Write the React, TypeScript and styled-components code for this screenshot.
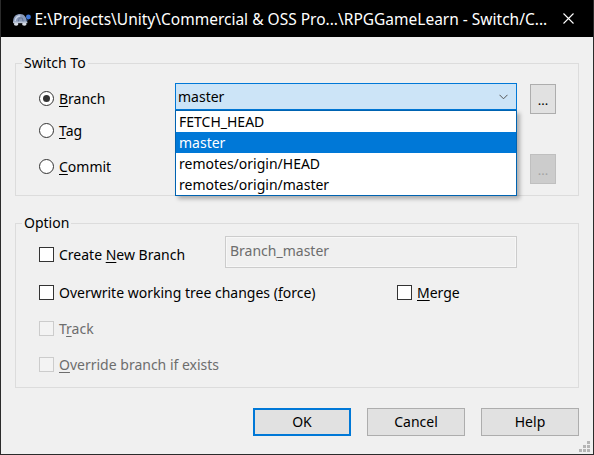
import React from 'react';
import styled, { createGlobalStyle } from 'styled-components';

const GlobalStyle = createGlobalStyle`
    html, body {
        margin: 0;
        padding: 0;
        background: #f0f0f0;
    }
    body {
        font-family: "Noto Sans", "Liberation Sans", sans-serif;
        font-size: 14px;
        color: #000;
    }
    * { box-sizing: border-box; }
`;

const Window = styled.div`
    position: relative;
    width: 594px;
    height: 455px;
    display: flex;
    flex-direction: column;
    background: #f0f0f0;
    border: 1px solid #2b2b2b;
    border-top: none;
    overflow: hidden;
`;

const TitleBar = styled.div`
    height: 37px;
    flex-shrink: 0;
    background: #000;
    display: flex;
    align-items: center;
    padding-left: 10px;
    color: #fff;
`;

const TitleText = styled.span`
    margin-left: 3px;
    font-size: 15.5px;
    white-space: nowrap;
    flex: 1;
`;

const CloseBtn = styled.div`
    width: 46px;
    height: 37px;
    display: flex;
    align-items: center;
    justify-content: center;
    margin-right: 3px;
`;

const Body = styled.div`
    flex: 1;
    padding: 16px 14px 0 14px;
    display: flex;
    flex-direction: column;
`;

const Group = styled.fieldset<{ $mt?: number }>`
    margin: ${p => p.$mt ?? 0}px 0 0 0;
    padding: 0;
    border: 1px solid #dcdcdc;
    min-width: 0;
`;

const Legend = styled.legend`
    padding: 0 2px;
    margin-left: 6px;
    line-height: 20px;
    font-size: 14px;
`;

const GroupInner = styled.div<{ $pt: number; $pb: number }>`
    padding: ${p => p.$pt}px 0 ${p => p.$pb}px 23px;
    display: flex;
    flex-direction: column;
`;

const Row = styled.div<{ $h: number; $mt?: number }>`
    height: ${p => p.$h}px;
    margin-top: ${p => p.$mt ?? 0}px;
    display: flex;
    align-items: center;
`;

const Option = styled.label<{ $w?: number; $mt?: number; $disabled?: boolean }>`
    display: flex;
    align-items: center;
    width: ${p => (p.$w ? `${p.$w}px` : 'auto')};
    margin-top: ${p => p.$mt ?? 0}px;
    flex-shrink: 0;
    color: ${p => (p.$disabled ? '#6d6d6d' : '#000')};
    white-space: nowrap;

    u {
        text-decoration-thickness: 1px;
        text-underline-offset: 2px;
    }
`;

const RadioCircle = styled.span<{ $checked?: boolean }>`
    width: 15px;
    height: 15px;
    border-radius: 50%;
    border: 1px solid #333;
    background: #fff;
    margin-right: 5px;
    display: flex;
    align-items: center;
    justify-content: center;

    &::after {
        content: '';
        width: 7px;
        height: 7px;
        border-radius: 50%;
        background: #333;
        display: ${p => (p.$checked ? 'block' : 'none')};
    }
`;

const CheckBox = styled.span<{ $disabled?: boolean }>`
    width: 15px;
    height: 15px;
    border: 1px solid ${p => (p.$disabled ? '#cccccc' : '#333')};
    background: ${p => (p.$disabled ? '#f3f3f3' : '#fff')};
    margin-right: 5px;
`;

const ComboWrap = styled.div`
    position: relative;
    width: 342px;
    height: 27px;
    align-self: flex-start;
    flex-shrink: 0;
`;

const Combo = styled.div`
    height: 27px;
    border: 1px solid #0078d7;
    background: #cce4f7;
    display: flex;
    align-items: center;
    padding: 0 8px 0 2px;
    justify-content: space-between;
`;

const DropList = styled.ul`
    position: absolute;
    top: 27px;
    left: 0;
    width: 342px;
    margin: 0;
    padding: 0;
    list-style: none;
    background: #fff;
    border: 1px solid #0063b1;
    box-shadow: 3px 3px 4px rgba(0, 0, 0, 0.28);
    z-index: 2;
`;

const DropItem = styled.li<{ $active?: boolean }>`
    height: 21px;
    line-height: 21px;
    padding-left: 3px;
    background: ${p => (p.$active ? '#0078d7' : '#fff')};
    color: ${p => (p.$active ? '#fff' : '#000')};
`;

const Spacer = styled.div<{ $w: number }>`
    width: ${p => p.$w}px;
    flex-shrink: 0;
`;

const DotsBtn = styled.div<{ $disabled?: boolean; $mt?: number }>`
    width: 26px;
    height: 30px;
    margin-left: 13px;
    margin-top: ${p => p.$mt ?? 0}px;
    align-self: flex-start;
    background: ${p => (p.$disabled ? '#cccccc' : '#e1e1e1')};
    border: 1px solid ${p => (p.$disabled ? '#bfbfbf' : '#adadad')};
    color: ${p => (p.$disabled ? '#a3a3a3' : '#000')};
    display: flex;
    align-items: center;
    justify-content: center;
    font-size: 13px;
    padding-top: 2px;
`;

const TextField = styled.div`
    width: 292px;
    height: 32px;
    border: 1px solid #cccccc;
    box-shadow: inset 0 0 0 1px #f7f7f7;
    background: #f0f0f0;
    color: #6d6d6d;
    display: flex;
    align-items: center;
    padding: 0 0 4px 4px;
`;

const ButtonRow = styled.div`
    margin-top: 20px;
    display: flex;
    justify-content: flex-end;
    gap: 16px;
`;

const DialogButton = styled.button<{ $default?: boolean }>`
    width: 98px;
    height: 28px;
    font-family: inherit;
    font-size: 14px;
    color: #000;
    background: #e1e1e1;
    border: ${p => (p.$default ? '2px solid #0078d7' : '1px solid #adadad')};
    padding: 0;
    padding-bottom: 1px;
`;

const Grip = styled.svg`
    position: absolute;
    right: 2px;
    bottom: 1px;
`;

const TurtleIcon = () => (
    <svg width="22" height="18" viewBox="0 0 20 16">
        <ellipse cx="5" cy="13" rx="2.2" ry="1.6" fill="#d8dde6" />
        <ellipse cx="13" cy="13" rx="2.2" ry="1.6" fill="#d8dde6" />
        <path d="M2 11 C2 5 5 3 9 3 C13 3 15 6 15.5 11 Z" fill="#8a9ab8" />
        <path d="M4 10 C4.5 6.5 6.5 5 9 5" stroke="#c9d3e6" strokeWidth="1.4" fill="none" />
        <path d="M7 11 L8 7 L11 7 L12 11" stroke="#5f708f" strokeWidth="0.8" fill="none" />
        <rect x="2" y="10.5" width="14" height="1.6" fill="#b8c2d4" />
        <circle cx="17" cy="6" r="2.4" fill="#3d76d8" />
        <path d="M15 8 L16.5 9 L15.5 10 Z" fill="#3d76d8" />
    </svg>
);

const Chevron = () => (
    <svg width="9" height="6" viewBox="0 0 9 6">
        <path d="M0.5 0.8 L4.5 4.8 L8.5 0.8" stroke="#555" strokeWidth="1" fill="none" />
    </svg>
);

const CloseIcon = () => (
    <svg width="11" height="11" viewBox="0 0 11 11">
        <path d="M0.5 0.5 L10.5 10.5 M10.5 0.5 L0.5 10.5" stroke="#fff" strokeWidth="1.1" />
    </svg>
);

const branches = ['FETCH_HEAD', 'master', 'remotes/origin/HEAD', 'remotes/origin/master'];

export default function App() {
    return (
        <>
            <GlobalStyle />
            <Window>
                <TitleBar>
                    <TurtleIcon />
                    <TitleText>E:\Projects\Unity\Commercial &amp; OSS Pro...\RPGGameLearn - Switch/C...</TitleText>
                    <CloseBtn>
                        <CloseIcon />
                    </CloseBtn>
                </TitleBar>
                <Body>
                    <Group>
                        <Legend>Switch To</Legend>
                        <GroupInner $pt={10} $pb={13}>
                            <Row $h={30}>
                                <Option $w={136}>
                                    <RadioCircle $checked />
                                    <span><u>B</u>ranch</span>
                                </Option>
                                <ComboWrap>
                                    <Combo>
                                        <span>master</span>
                                        <Chevron />
                                    </Combo>
                                    <DropList>
                                        {branches.map(b => (
                                            <DropItem key={b} $active={b === 'master'}>{b}</DropItem>
                                        ))}
                                    </DropList>
                                </ComboWrap>
                                <DotsBtn $mt={1}>...</DotsBtn>
                            </Row>
                            <Row $h={35}>
                                <Option $w={136}>
                                    <RadioCircle />
                                    <span><u>T</u>ag</span>
                                </Option>
                            </Row>
                            <Row $h={31} $mt={3}>
                                <Option $w={136}>
                                    <RadioCircle />
                                    <span><u>C</u>ommit</span>
                                </Option>
                                <Spacer $w={342} />
                                <DotsBtn $disabled $mt={3}>...</DotsBtn>
                            </Row>
                        </GroupInner>
                    </Group>

                    <Group $mt={17}>
                        <Legend>Option</Legend>
                        <GroupInner $pt={3} $pb={5}>
                            <Row $h={32}>
                                <Option $w={186} $mt={4}>
                                    <CheckBox />
                                    <span>Create <u>N</u>ew Branch</span>
                                </Option>
                                <TextField>Branch_master</TextField>
                            </Row>
                            <Row $h={36} $mt={6}>
                                <Option $w={358}>
                                    <CheckBox />
                                    <span>Overwrite working tree changes (<u>f</u>orce)</span>
                                </Option>
                                <Option>
                                    <CheckBox />
                                    <span><u>M</u>erge</span>
                                </Option>
                            </Row>
                            <Row $h={36}>
                                <Option $disabled>
                                    <CheckBox $disabled />
                                    <span>T<u>r</u>ack</span>
                                </Option>
                            </Row>
                            <Row $h={36}>
                                <Option $disabled>
                                    <CheckBox $disabled />
                                    <span><u>O</u>verride branch if exists</span>
                                </Option>
                            </Row>
                        </GroupInner>
                    </Group>

                    <ButtonRow>
                        <DialogButton $default>OK</DialogButton>
                        <DialogButton>Cancel</DialogButton>
                        <DialogButton>Help</DialogButton>
                    </ButtonRow>
                </Body>
                <Grip width="12" height="12" viewBox="0 0 12 12">
                    <rect x="8" y="0" width="3" height="3" fill="#b5b5b5" />
                    <rect x="4" y="4" width="3" height="3" fill="#b5b5b5" />
                    <rect x="8" y="4" width="3" height="3" fill="#b5b5b5" />
                    <rect x="0" y="8" width="3" height="3" fill="#b5b5b5" />
                    <rect x="4" y="8" width="3" height="3" fill="#b5b5b5" />
                    <rect x="8" y="8" width="3" height="3" fill="#b5b5b5" />
                </Grip>
            </Window>
        </>
    );
}
